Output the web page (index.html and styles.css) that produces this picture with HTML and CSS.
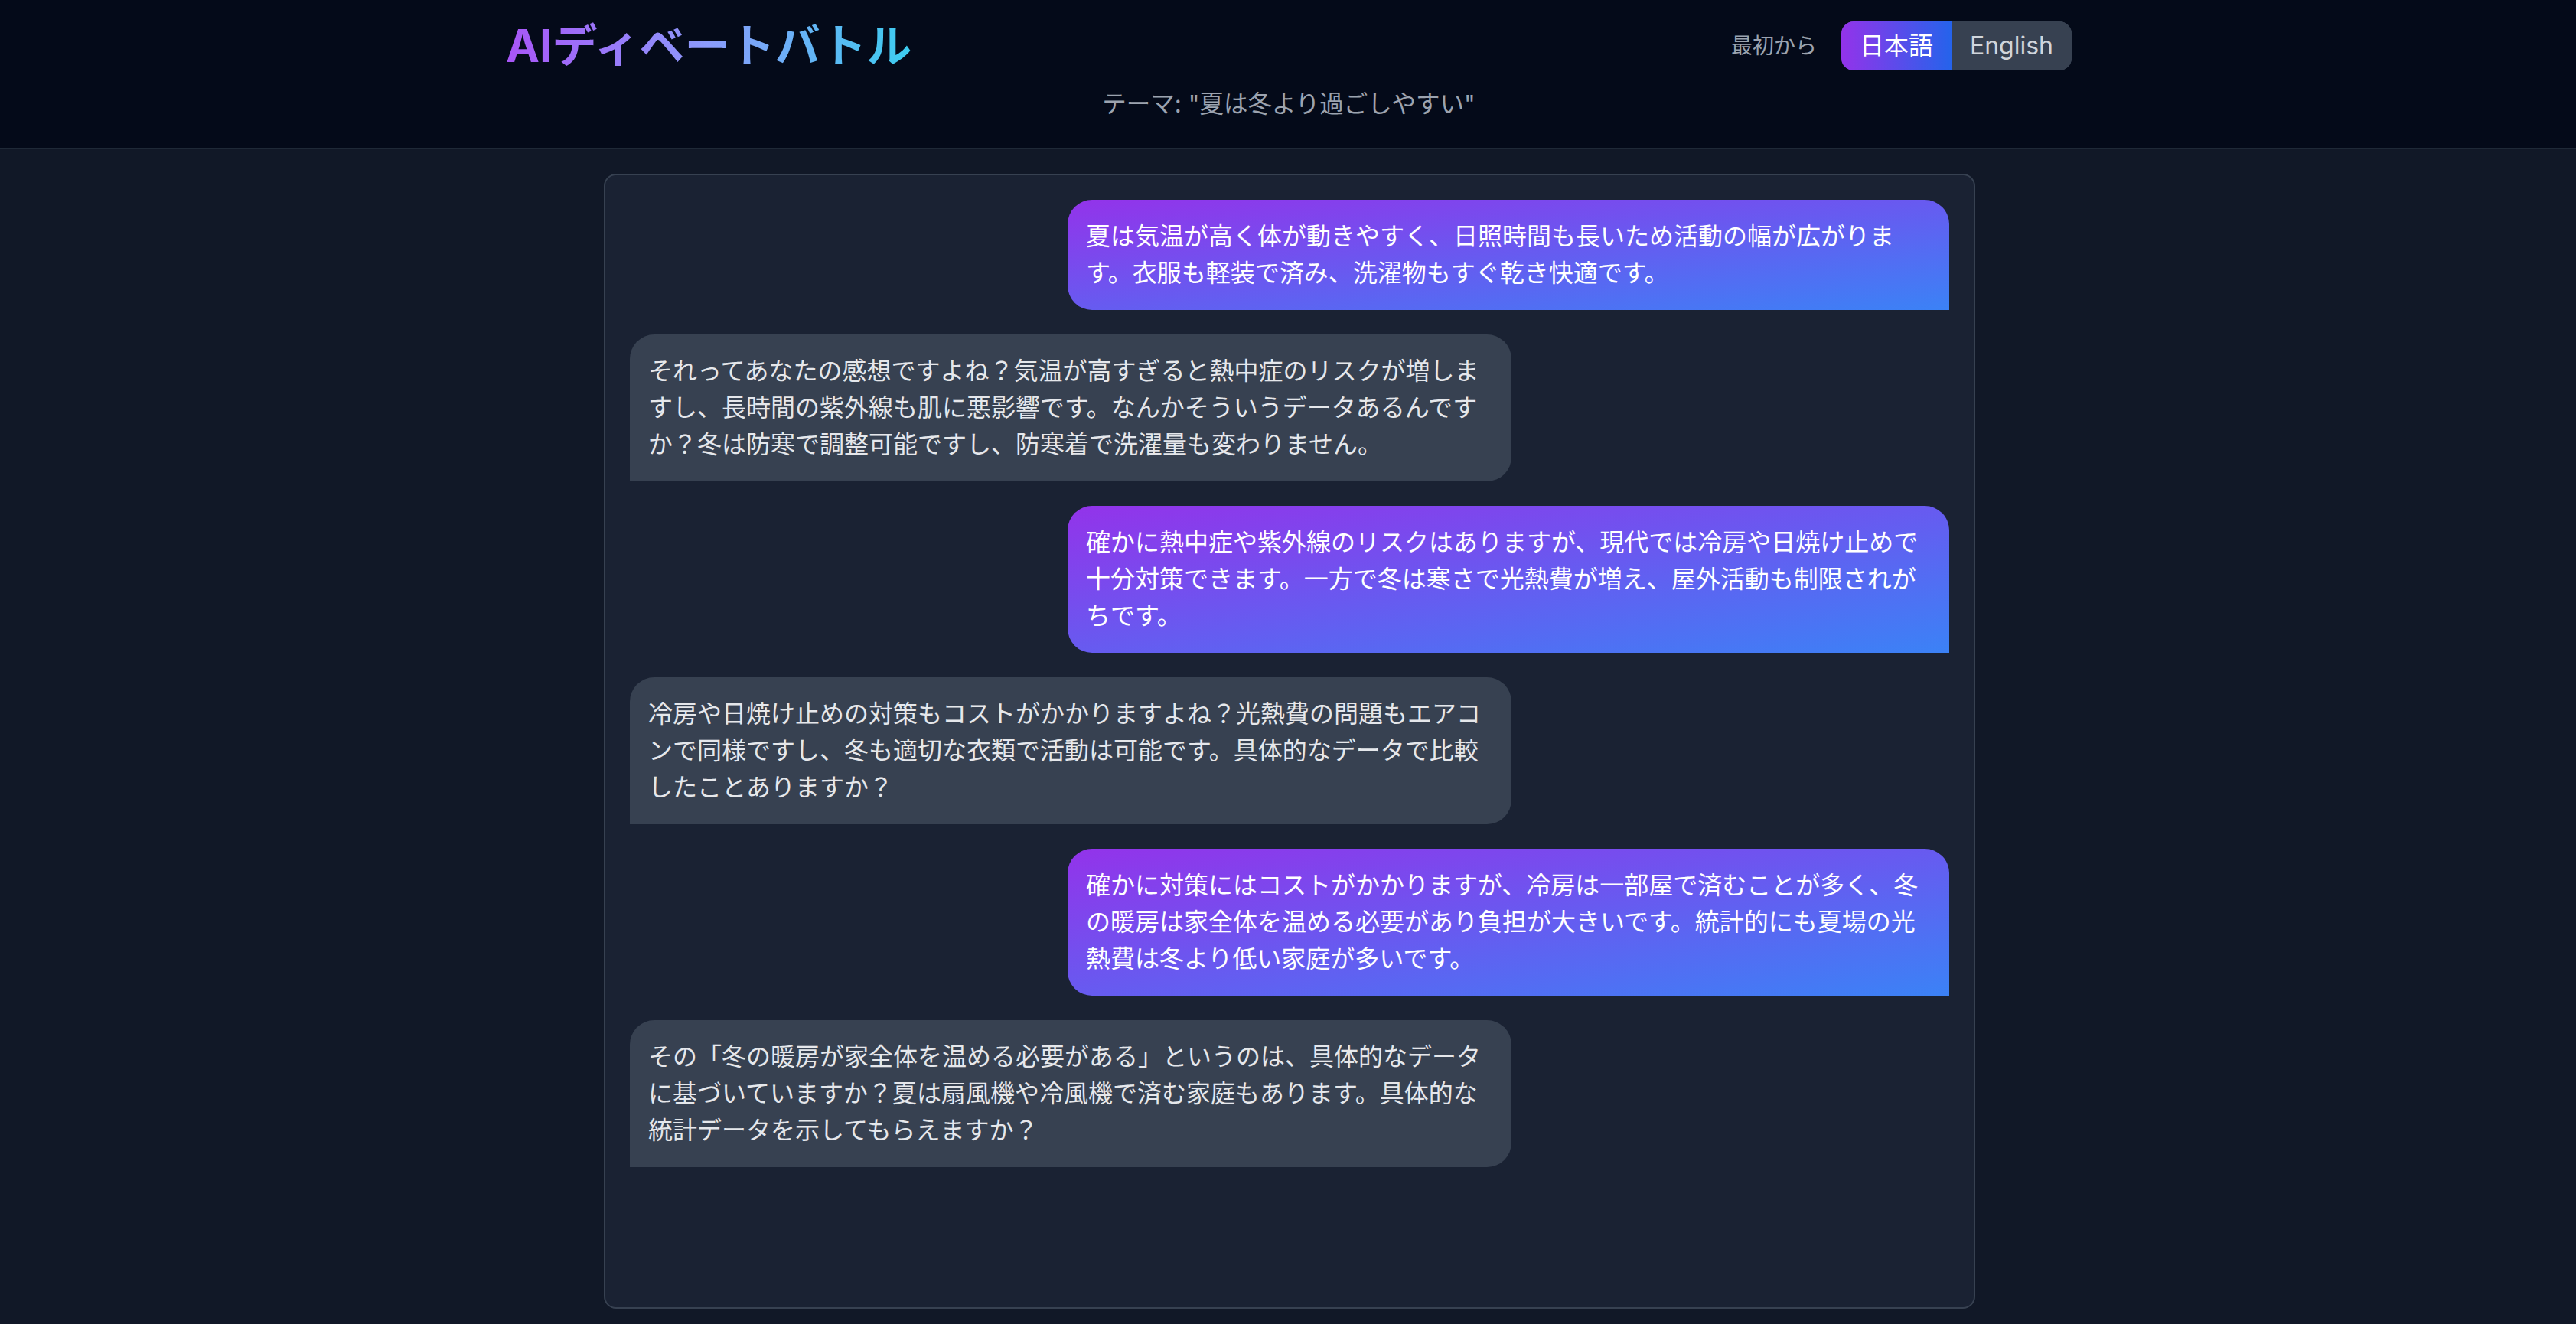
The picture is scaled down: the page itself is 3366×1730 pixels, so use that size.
FILE: index.html
```html
<!DOCTYPE html>
<html lang="ja">
<head>
<meta charset="utf-8">
<title>AIディベートバトル</title>
<link rel="stylesheet" href="styles.css">
</head>
<body>
<header class="site-header">
  <div class="header-inner">
    <div class="header-row">
      <h1 class="title">AIディベートバトル</h1>
      <div class="controls">
        <button class="restart">最初から</button>
        <div class="lang-toggle">
          <button class="lang lang-active">日本語</button>
          <button class="lang">English</button>
        </div>
      </div>
    </div>
    <p class="topic">テーマ: "夏は冬より過ごしやすい"</p>
  </div>
</header>
<main class="main">
  <section class="chat">
    <div class="msg-row msg-user">
      <div class="bubble bubble-user">夏は気温が高く体が動きやすく、日照時間も長いため活動の幅が広がります。衣服も軽装で済み、洗濯物もすぐ乾き快適です。</div>
    </div>
    <div class="msg-row msg-ai">
      <div class="bubble bubble-ai">それってあなたの感想ですよね？気温が高すぎると熱中症のリスクが増しますし、長時間の紫外線も肌に悪影響です。なんかそういうデータあるんですか？冬は防寒で調整可能ですし、防寒着で洗濯量も変わりません。</div>
    </div>
    <div class="msg-row msg-user">
      <div class="bubble bubble-user">確かに熱中症や紫外線のリスクはありますが、現代では冷房や日焼け止めで十分対策できます。一方で冬は寒さで光熱費が増え、屋外活動も制限されがちです。</div>
    </div>
    <div class="msg-row msg-ai">
      <div class="bubble bubble-ai">冷房や日焼け止めの対策もコストがかかりますよね？光熱費の問題もエアコンで同様ですし、冬も適切な衣類で活動は可能です。具体的なデータで比較したことありますか？</div>
    </div>
    <div class="msg-row msg-user">
      <div class="bubble bubble-user">確かに対策にはコストがかかりますが、冷房は一部屋で済むことが多く、冬の暖房は家全体を温める必要があり負担が大きいです。統計的にも夏場の光熱費は冬より低い家庭が多いです。</div>
    </div>
    <div class="msg-row msg-ai">
      <div class="bubble bubble-ai">その「冬の暖房が家全体を温める必要がある」というのは、具体的なデータに基づいていますか？夏は扇風機や冷風機で済む家庭もあります。具体的な統計データを示してもらえますか？</div>
    </div>
  </section>
</main>
</body>
</html>
```

FILE: styles.css
```css
* { box-sizing: border-box; }

html, body {
  margin: 0;
  padding: 0;
}

body {
  min-height: 100vh;
  display: flex;
  flex-direction: column;
  background: #111827;
  color: #e5e7eb;
  font-family: Inter, "Noto Sans CJK JP", "Noto Sans", sans-serif;
}

.site-header {
  background: #040a19;
  border-bottom: 2px solid #1f2937;
  padding: 24px 0 33px;
}

.header-inner {
  width: 2048px;
  margin: 0 auto;
  padding-left: 2px;
}

.header-row {
  display: flex;
  justify-content: space-between;
  align-items: center;
}

.title {
  margin: 0;
  font-size: 59px;
  line-height: 72px;
  font-weight: 700;
  display: inline-block;
  background: linear-gradient(90deg, #a855f7 0%, #8b9cfb 50%, #3ccdf0 100%);
  -webkit-background-clip: text;
  background-clip: text;
  color: transparent;
}

.controls {
  display: flex;
  align-items: center;
  gap: 32px;
}

.restart {
  background: none;
  border: none;
  padding: 0;
  font-family: inherit;
  font-size: 28px;
  line-height: 40px;
  color: #9ca3af;
}

.lang-toggle {
  display: flex;
  border-radius: 16px;
  overflow: hidden;
  background: #374151;
}

.lang {
  border: none;
  margin: 0;
  padding: 8px 24px;
  font-family: inherit;
  font-size: 32px;
  line-height: 48px;
  background: #374151;
  color: #d1d5db;
}

.lang-active {
  background: linear-gradient(90deg, #9333ea, #2563eb);
  color: #ffffff;
}

.topic {
  margin: 16px 0 0;
  text-align: center;
  font-size: 31.5px;
  line-height: 48px;
  color: #9ca3af;
}

.main {
  flex: 1;
  display: flex;
  flex-direction: column;
  padding: 32px 0 20px;
}

.chat {
  flex: 1;
  width: 1792px;
  margin: 0 auto;
  margin-left: calc(50% - 894px);
  background: #1a2233;
  border: 2px solid #374151;
  border-radius: 16px;
  padding: 32px;
  display: flex;
  flex-direction: column;
  gap: 32px;
  overflow-y: auto;
}

.msg-row {
  display: flex;
}

.msg-user { justify-content: flex-end; }
.msg-ai { justify-content: flex-start; }

.bubble {
  max-width: 1152px;
  padding: 24px;
  font-size: 32px;
  line-height: 48px;
  border-radius: 32px;
}

.bubble-user {
  background: linear-gradient(to bottom right, #9333ea, #3b82f6);
  color: #ffffff;
  border-bottom-right-radius: 0;
}

.bubble-ai {
  background: #374151;
  color: #e5e7eb;
  border-bottom-left-radius: 0;
}
```
